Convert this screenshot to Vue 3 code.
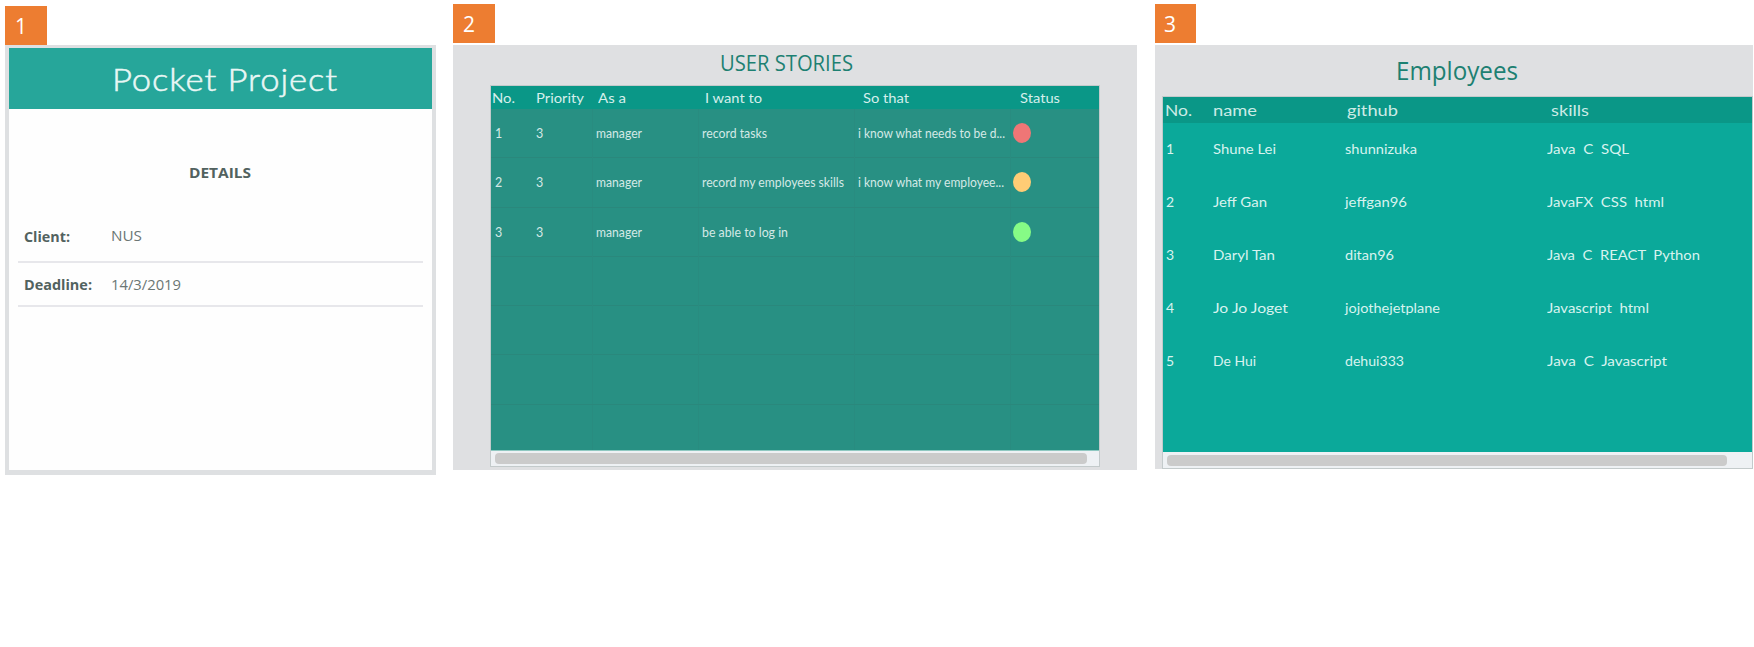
<script setup>
const details = [
  { label: 'Client:', value: 'NUS', lw: 46, vw: 31, cls: 'client' },
  { label: 'Deadline:', value: '14/3/2019', lw: 68, vw: 70, cls: 'deadline' },
]

const storyHeads = [
  ['No.', 23], ['Priority', 48], ['As a', 28], ['I want to', 57], ['So that', 46], ['Status', 40],
]
const stories = [
  { cells: [['1', 0], ['3', 0], ['manager', 46], ['record tasks', 65], ['i know what needs to be d...', 147]], status: 'red' },
  { cells: [['2', 0], ['3', 0], ['manager', 46], ['record my employees skills', 142], ['i know what my employee...', 146]], status: 'amber' },
  { cells: [['3', 0], ['3', 0], ['manager', 46], ['be able to log in', 86], ['', 0]], status: 'green' },
  { cells: [[], [], [], [], []] },
  { cells: [[], [], [], [], []] },
  { cells: [[], [], [], [], []] },
  { cells: [[], [], [], [], []] },
]

const employeeHeads = [['No.', 27], ['name', 44], ['github', 51], ['skills', 38]]
const employees = [
  [['1', 0], ['Shune Lei', 63], ['shunnizuka', 72], ['Java  C  SQL', 82]],
  [['2', 0], ['Jeff Gan', 54], ['jeffgan96', 62], ['JavaFX  CSS  html', 117]],
  [['3', 0], ['Daryl Tan', 62], ['ditan96', 49], ['Java  C  REACT  Python', 153]],
  [['4', 0], ['Jo Jo Joget', 75], ['jojothejetplane', 95], ['Javascript  html', 102]],
  [['5', 0], ['De Hui', 43], ['dehui333', 59], ['Java  C  Javascript', 120]],
]

// Widens or narrows a label's letters so that it takes up the given width.
const vFit = {
  mounted(el, { value }) {
    if (!value) return
    const natural = el.getBoundingClientRect().width
    el.style.transform = `scaleX(${(value / natural).toFixed(4)})`
  },
}
</script>

<template>
  <main class="board">
    <section class="col project">
      <div class="badge">1</div>
      <div class="panel">
        <header class="banner"><span v-fit="226">Pocket Project</span></header>
        <h2 class="details"><span v-fit="62">DETAILS</span></h2>
        <div v-for="d in details" :key="d.label" class="field" :class="d.cls">
          <span class="label"><span v-fit="d.lw">{{ d.label }}</span></span>
          <span class="value"><span v-fit="d.vw">{{ d.value }}</span></span>
        </div>
      </div>
    </section>

    <section class="col stories">
      <div class="badge">2</div>
      <div class="panel">
        <h1 class="title"><span v-fit="133">USER STORIES</span></h1>
        <div class="table">
          <div class="row head">
            <div v-for="h in storyHeads" :key="h[0]" class="cell"><span v-fit="h[1]">{{ h[0] }}</span></div>
          </div>
          <div class="body">
            <div v-for="(s, i) in stories" :key="i" class="row">
              <div v-for="(c, j) in s.cells" :key="j" class="cell"><span v-fit="c[1]">{{ c[0] }}</span></div>
              <div class="cell"><i v-if="s.status" class="dot" :class="s.status"></i></div>
            </div>
          </div>
          <div class="track"><div class="thumb"></div></div>
        </div>
      </div>
    </section>

    <section class="col employees">
      <div class="badge">3</div>
      <div class="panel">
        <h1 class="title"><span v-fit="122">Employees</span></h1>
        <div class="table">
          <div class="row head">
            <div v-for="h in employeeHeads" :key="h[0]" class="cell"><span v-fit="h[1]">{{ h[0] }}</span></div>
          </div>
          <div class="body">
            <div v-for="(e, i) in employees" :key="i" class="row">
              <div v-for="(c, j) in e" :key="j" class="cell"><span v-fit="c[1]">{{ c[0] }}</span></div>
            </div>
          </div>
          <div class="track"><div class="thumb"></div></div>
        </div>
      </div>
    </section>
  </main>
</template>

<style>
body { background: #fff; overflow: hidden; }
</style>

<style scoped>
.board {
  display: grid;
  grid-template-columns: 431px 684px 599px;
  column-gap: 17px;
  padding-left: 5px;
  height: 647px;
  box-sizing: border-box;
  align-items: start;
  font-family: "Lato", "Open Sans", sans-serif;
}
.board span { display: inline-block; white-space: pre; transform-origin: 0 50%; }
.employees { margin-left: 1px; }
.badge {
  width: 42px;
  height: 39px;
  margin: 4px 0 2px;
  padding-left: 10px;
  box-sizing: border-box;
  background: #ed7d31;
  color: #fff;
  font: 21px/40px "Open Sans", sans-serif;
}
.project .badge { margin: 6px 0 0; }
.employees .badge { width: 41px; padding-left: 9px; }
.panel { background: #dfe0e2; box-sizing: border-box; }

.project .panel {
  height: 430px;
  background: #fefefe;
  border: solid #dee0e2;
  border-width: 3px 4px 5px;
}
.banner {
  height: 61px;
  padding-left: 103px;
  background: #26a69a;
  color: #e9f7f5;
  font-size: 30.5px;
  font-weight: 300;
  line-height: 62px;
  letter-spacing: 0.8px;
  -webkit-text-stroke: 0.5px #e9f7f5;
}
.details {
  margin: 51px 0 0;
  padding-left: 180px;
  height: 25px;
  font: 700 15px/24px "Open Sans", sans-serif;
  color: #52625f;
}
.field {
  display: flex;
  margin: 0 9px;
  padding-left: 6px;
  border-bottom: 2px solid #e7e7eb;
  font: 15px/24px "Open Sans", sans-serif;
  color: #6b7674;
}
.field .label { width: 87px; font-weight: 700; color: #52625f; }
.client { height: 38px; margin-top: 38px; }
.client .label { padding-top: 1px; }
.deadline { height: 33px; padding-top: 9px; }

.title {
  margin: 0;
  color: #1d8072;
  font-family: "Open Sans", sans-serif;
  font-weight: 400;
}
.stories .panel { height: 425px; padding: 0 37px; }
.stories .title { height: 40px; padding-left: 230px; font-size: 22px; line-height: 35px; }
.table { box-sizing: border-box; border: 1px solid #c3cacb; }
.row { display: grid; }
.cell { box-sizing: border-box; min-width: 0; }
.stories .table { height: 382px; width: 610px; }
.stories .row { grid-template-columns: 43px 59px 106px 156px 156px 1fr; height: 49.3px; }
.stories .row.head { height: 23px; background: #0a9787; color: #d6efec; font-size: 14px; line-height: 23px; }
.stories .head .cell { padding-left: 8px; }
.stories .head .cell:nth-child(1) { padding-left: 1px; }
.stories .head .cell:nth-child(2) { padding-left: 2px; }
.stories .head .cell:nth-child(3) { padding-left: 5px; }
.stories .head .cell:nth-child(4) { padding-left: 6px; }
.stories .head .cell:nth-child(5) { padding-left: 8px; }
.stories .head .cell:nth-child(6) { padding-left: 9px; }
.stories .body {
  height: 341px;
  overflow: hidden;
  background: #289083;
  color: #d4e9e6;
  font-size: 12.5px;
  line-height: 49px;
}
.stories .body .row { border-bottom: 1px solid #2a887c; box-sizing: border-box; }
.stories .body .cell { padding-left: 3px; border-right: 1px solid #298c80; }
.stories .body .cell:nth-child(1), .stories .body .cell:last-child { border-right: 0; }
.stories .body .cell:nth-child(1) { padding-left: 4px; }
.stories .body .cell:nth-child(2) { padding-left: 2px; }
.stories .body .cell:last-child { padding-left: 2px; }
.dot { display: block; width: 18px; height: 20px; margin: 14px 0 0; border-radius: 50%; }
.red { background: #ef7676; }
.amber { background: #ffcc75; }
.green { background: #86fb86; }

.track { box-sizing: border-box; background: #eef1f4; }
.thumb { border-radius: 4px; background: #cbcbcb; }
.stories .track { height: 16px; padding: 2px 0 0 4px; border-top: 1px solid #8fc8c1; }
.stories .thumb { width: 592px; height: 11px; }

.employees .panel { height: 424px; padding-left: 7px; }
.employees .title { height: 51px; padding-left: 234px; font-size: 25px; line-height: 50px; }
.employees .table { width: 591px; height: 373px; }
.employees .row { grid-template-columns: 48px 132px 202px 1fr; height: 53.1px; }
.employees .row.head { height: 26px; background: #0a9787; color: #cdebe6; font-size: 15.5px; line-height: 27px; }
.employees .head .cell { padding-left: 2px; }
.employees .head .cell:nth-child(3) { padding-left: 4px; }
.employees .head .cell:nth-child(4) { padding-left: 6px; }
.employees .body {
  height: 329px;
  background: #0ba99a;
  color: #d8f3ef;
  font-size: 14px;
  line-height: 52px;
}
.employees .body .cell { padding-left: 2px; }
.employees .body .cell:first-child { padding-left: 3px; }
.employees .track { height: 16px; padding: 3px 0 0 4px; }
.employees .thumb { width: 560px; height: 11px; }
</style>
